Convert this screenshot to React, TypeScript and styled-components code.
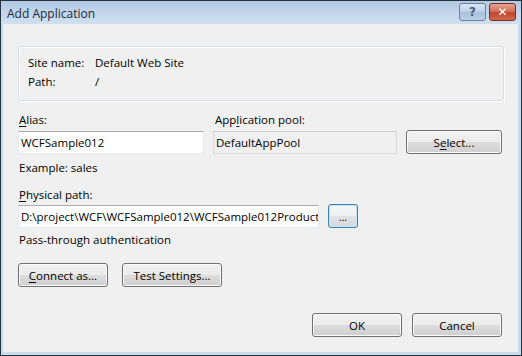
import React from "react";
import styled, { createGlobalStyle, css } from "styled-components";

const Global = createGlobalStyle`
  html, body { margin: 0; padding: 0; background: #fff; }
  body { font-family: "Open Sans", "Noto Sans", sans-serif; font-size: 11.5px; color: #000; }
  * { box-sizing: border-box; }
`;

const Window = styled.div`
  width: 522px;
  height: 356px;
  display: flex;
  flex-direction: column;
  border: 1px solid #26323e;
  background: #c9dbee;
  overflow: hidden;
`;

const TitleBar = styled.div`
  height: 23px;
  display: flex;
  align-items: center;
  padding: 0 5px 0 6px;
  background: linear-gradient(#b2c9e2, #c6d8ec 60%, #cfdff0);
`;

const Title = styled.div`
  flex: 1;
  font-size: 12px;
  color: #1d2b3c;
  padding-top: 1px;
`;

const CaptionButton = styled.div<{ $close?: boolean }>`
  width: 27px;
  height: 18px;
  margin-top: -2px;
  border: 1px solid ${(p) => (p.$close ? "#7a2c21" : "#6c84a0")};
  border-radius: 3px;
  display: flex;
  align-items: center;
  justify-content: center;
  font-family: "DejaVu Sans", sans-serif;
  font-size: 12px;
  font-weight: bold;
  ${(p) =>
    p.$close
      ? css`
          margin-left: 3px;
          background: linear-gradient(#e4a592, #d5705a 45%, #c3452e 55%, #cf6a4c);
          color: #fff;
        `
      : css`
          background: linear-gradient(#d9e6f3, #bed2e8 45%, #a9c1dc 55%, #bcd0e6);
          color: #47607c;
        `}
`;

const Client = styled.div`
  flex: 1;
  margin: 0 3px 3px 2px;
  background: #f0f0f0;
  padding: 22px 0 0 15px;
  display: flex;
  flex-direction: column;
`;

const GroupBox = styled.div`
  width: 486px;
  height: 55px;
  border: 1px solid #d5dfe5;
  border-radius: 3px;
  box-shadow: inset 1px 1px 0 #fff, 1px 1px 0 #fff;
  padding: 6px 0 0 9px;
  display: grid;
  grid-template-columns: 67px auto;
  grid-auto-rows: 19px;
  align-items: center;
`;

const FormGrid = styled.div`
  margin-top: 9px;
  display: grid;
  grid-template-columns: 186px 184px 96px;
  column-gap: 9px;
  align-items: center;
`;

const Label = styled.div<{ $indent?: number; $top?: number }>`
  height: 20px;
  line-height: 20px;
  margin-top: ${(p) => p.$top ?? 0}px;
  padding-left: ${(p) => p.$indent ?? 1}px;
`;

const U = styled.span`
  text-decoration: underline;
  text-underline-offset: 2px;
`;

const TextBox = styled.div<{ $readonly?: boolean; $w?: number }>`
  height: 23px;
  width: ${(p) => (p.$w ? `${p.$w}px` : "auto")};
  border: 1px solid #e3e9ef;
  border-top-color: #abadb3;
  background: ${(p) => (p.$readonly ? "#f0f0f0" : "#fff")};
  ${(p) =>
    p.$readonly &&
    css`
      border-color: #dadada;
      border-top-color: #cfcfcf;
    `}
  padding-left: 2px;
  line-height: 21px;
  white-space: nowrap;
  overflow: hidden;
`;

const Button = styled.div<{ $w: number; $focus?: boolean }>`
  width: ${(p) => p.$w}px;
  height: 24px;
  border: 1px solid ${(p) => (p.$focus ? "#3c7fb1" : "#707070")};
  border-radius: 3px;
  box-shadow: inset 0 0 0 1px ${(p) => (p.$focus ? "#c5e6f7" : "#fbfbfb")};
  background: ${(p) =>
    p.$focus
      ? "linear-gradient(#f4f6f8, #eceef0 50%, #e0e3e6 50%, #d6dadd)"
      : "linear-gradient(#f2f2f2, #ebebeb 50%, #dddddd 50%, #cfcfcf)"};
  display: flex;
  align-items: center;
  justify-content: center;
  white-space: nowrap;
`;

const Row = styled.div<{ $top: number; $gap?: number; $end?: boolean }>`
  margin-top: ${(p) => p.$top}px;
  display: flex;
  align-items: center;
  gap: ${(p) => p.$gap ?? 10}px;
  ${(p) =>
    p.$end &&
    css`
      justify-content: flex-end;
      padding-right: 16px;
    `}
`;

const Dots = styled.span`
  font-size: 10px;
  margin-top: 2px;
`;

export default function App() {
  return (
    <>
      <Global />
      <Window>
        <TitleBar>
          <Title>Add Application</Title>
          <CaptionButton>?</CaptionButton>
          <CaptionButton $close>✕</CaptionButton>
        </TitleBar>
        <Client>
          <GroupBox>
            <span>Site name:</span>
            <span>Default Web Site</span>
            <span>Path:</span>
            <span>/</span>
          </GroupBox>
          <FormGrid>
            <Label>
              <U>A</U>lias:
            </Label>
            <Label $indent={2}>
              App<U>l</U>ication pool:
            </Label>
            <span />
            <TextBox>WCFSample012</TextBox>
            <TextBox $readonly>DefaultAppPool</TextBox>
            <Button $w={96}>
              S<U>e</U>lect...
            </Button>
          </FormGrid>
          <Label $top={4}>Example: sales</Label>
          <Label $top={7}>
            <U>P</U>hysical path:
          </Label>
          <Row $top={-1} $gap={9}>
            <TextBox $w={301}>
              D:\project\WCF\WCFSample012\WCFSample012Product
            </TextBox>
            <Button $w={30} $focus>
              <Dots>...</Dots>
            </Button>
          </Row>
          <Label $top={2}>Pass-through authentication</Label>
          <Row $top={13} $gap={14}>
            <Button $w={90}>
              <span>
                <U>C</U>onnect as...
              </span>
            </Button>
            <Button $w={100}>
              <span>
                Test Settin<U>g</U>s...
              </span>
            </Button>
          </Row>
          <Row $top={26} $end>
            <Button $w={90}>OK</Button>
            <Button $w={90}>Cancel</Button>
          </Row>
        </Client>
      </Window>
    </>
  );
}
